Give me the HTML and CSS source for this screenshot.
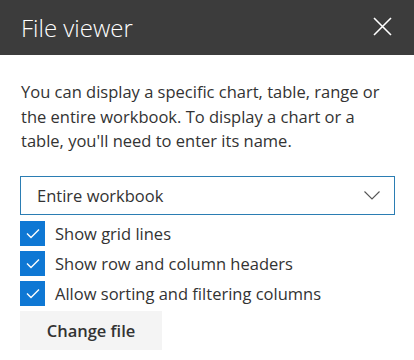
FILE: index.html
```html
<!DOCTYPE html>
<html lang="en">

<head>
    <meta charset="UTF-8">
    <meta name="viewport" content="width=device-width, initial-scale=1.0">
    <title>File viewer</title>
    <link rel="stylesheet" href="styles.css">
</head>

<body>
    <div class="panel">
        <!-- Header -->
        <div class="panel-header">
            <div class="panel-title">File viewer</div>
            <button class="close-btn" type="button" aria-label="Close">
                <svg width="19" height="19" viewBox="0 0 19 19">
                    <path d="M1 1 L18 18 M18 1 L1 18" stroke="#fff" stroke-width="1.6" fill="none" />
                </svg>
            </button>
        </div>

        <div class="panel-body">
            <p class="description">
                You can display a specific chart, table, range or the entire workbook. To display a chart or a
                table, you'll need to enter its name.
            </p>

            <div class="dropdown">
                <span class="dropdown-value">Entire workbook</span>
                <svg class="chevron" width="16" height="9" viewBox="0 0 16 9">
                    <path d="M0.5 0.5 L8 8 L15.5 0.5" stroke="#555" stroke-width="1.1" fill="none" />
                </svg>
            </div>

            <div class="options">
                <label class="option">
                    <span class="checkbox">
                        <svg width="14" height="11" viewBox="0 0 14 11">
                            <path d="M1 5.5 L5 9.5 L13 1.5" stroke="#fff" stroke-width="1.4" fill="none" />
                        </svg>
                    </span>
                    Show grid lines
                </label>
                <label class="option">
                    <span class="checkbox">
                        <svg width="14" height="11" viewBox="0 0 14 11">
                            <path d="M1 5.5 L5 9.5 L13 1.5" stroke="#fff" stroke-width="1.4" fill="none" />
                        </svg>
                    </span>
                    Show row and column headers
                </label>
                <label class="option">
                    <span class="checkbox">
                        <svg width="14" height="11" viewBox="0 0 14 11">
                            <path d="M1 5.5 L5 9.5 L13 1.5" stroke="#fff" stroke-width="1.4" fill="none" />
                        </svg>
                    </span>
                    Allow sorting and filtering columns
                </label>
            </div>

            <button class="change-btn" type="button">Change file</button>
        </div>
    </div>
</body>

</html>
```

FILE: styles.css
```css
body {
    margin: 0;
    font-family: 'Open Sans', sans-serif;
    background-color: #ffffff;
    color: #333333;
}

.panel {
    width: 414px;
}

.panel-header {
    height: 55px;
    background-color: #3c3c3c;
    display: flex;
    align-items: center;
    justify-content: space-between;
    padding: 0 22px 0 21px;
    box-sizing: border-box;
}

.panel-title {
    color: #ffffff;
    font-size: 24px;
    font-weight: 300;
    margin-top: -1px;
}

.close-btn {
    background: none;
    border: none;
    padding: 0;
    width: 19px;
    height: 19px;
    cursor: pointer;
    margin-top: -2px;
}

.panel-body {
    padding: 0 19px 0 20px;
}

/* Intro text */
.description {
    margin: 25px 0 0 1px;
    max-width: 368px;
    font-size: 16.5px;
    line-height: 24.5px;
    color: #333333;
}

.dropdown {
    margin-top: 22px;
    height: 39px;
    border: 1px solid #2b7db3;
    box-sizing: border-box;
    display: flex;
    align-items: center;
    justify-content: space-between;
    padding: 0 14px 0 16px;
    font-size: 16.5px;
    color: #333333;
}

.options {
    margin-top: 6px;
    display: flex;
    flex-direction: column;
    gap: 5px;
}

.option {
    display: flex;
    align-items: center;
    height: 25px;
    font-size: 16.5px;
    color: #333333;
    cursor: pointer;
}

.checkbox {
    width: 25px;
    height: 25px;
    background-color: #0f78d4;
    display: flex;
    align-items: center;
    justify-content: center;
    margin-right: 10px;
}

.change-btn {
    margin-top: 5px;
    width: 142px;
    height: 39px;
    background-color: #f4f4f4;
    border: none;
    font-family: 'Open Sans', sans-serif;
    font-size: 16.5px;
    font-weight: 600;
    color: #333333;
    cursor: pointer;
}
```
